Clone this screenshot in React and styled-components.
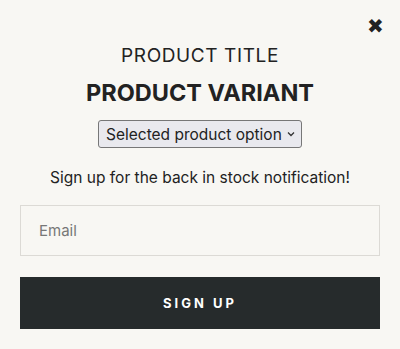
import React from "react";
import styled, { createGlobalStyle } from "styled-components";

const Global = createGlobalStyle`
  html, body {
    margin: 0;
    background: #f8f7f3;
    font-family: Inter, "Noto Sans", sans-serif;
    color: #222;
  }
`;

const App = () => {
  return (
    <>
      <Global />
      <Modal>
        <CloseRow>
          <Close aria-label="Close">✖</Close>
        </CloseRow>
        <Title>PRODUCT TITLE</Title>
        <Variant>PRODUCT VARIANT</Variant>
        <SelectBox>
          <Select defaultValue="opt">
            <option value="opt">Selected product option</option>
          </Select>
          <svg width="8" height="6" viewBox="0 0 8 6">
            <path d="M1 1.5 L4 4.5 L7 1.5" fill="none" stroke="#333" strokeWidth="1.3" />
          </svg>
        </SelectBox>
        <Note>Sign up for the back in stock notification!</Note>
        <Form>
          <Input placeholder="Email" />
          <Button>SIGN UP</Button>
        </Form>
      </Modal>
    </>
  );
};

export default App;

const Modal = styled.div`
  width: 400px;
  height: 349px;
  box-sizing: border-box;
  padding: 15px 20px 20px;
  display: flex;
  flex-direction: column;
  align-items: center;
`;
const CloseRow = styled.div`
  align-self: stretch;
  display: flex;
  justify-content: flex-end;
  height: 20px;
`;
const Close = styled.span`
  font-size: 20px;
  line-height: 22px;
  color: #222;
  margin-right: -4px;
  cursor: pointer;
`;
const Title = styled.h2`
  margin: 6px 0 0;
  font-size: 19px;
  font-weight: 400;
  letter-spacing: 0.6px;
  line-height: 30px;
  color: #222;
`;
const Variant = styled.h1`
  margin: 7px 0 0;
  font-size: 23.5px;
  font-weight: 700;
  line-height: 30px;
  color: #222;
`;
const SelectBox = styled.label`
  margin-top: 12px;
  display: inline-flex;
  align-items: center;
  gap: 5px;
  height: 28px;
  box-sizing: border-box;
  padding: 0 6px 0 7px;
  background: #e9e9ee;
  border: 1px solid #777;
  border-radius: 3px;
`;
const Select = styled.select`
  appearance: none;
  border: none;
  background: transparent;
  font-family: inherit;
  font-size: 15.5px;
  color: #222;
  padding: 0;
  outline: none;
`;
const Note = styled.p`
  margin: 20px 0 0;
  font-size: 15.5px;
  line-height: 20px;
  color: #222;
`;
const Form = styled.div`
  align-self: stretch;
  display: flex;
  flex-direction: column;
  gap: 21px;
  margin-top: 17px;
`;
const Input = styled.input`
  height: 51px;
  box-sizing: border-box;
  border: 1px solid #dcdad5;
  background: transparent;
  padding: 0 18px;
  font-family: inherit;
  font-size: 15px;
  outline: none;
  &::placeholder {
    color: #777;
  }
`;
const Button = styled.button`
  height: 52px;
  border: none;
  background: #262b2c;
  color: #fff;
  font-family: inherit;
  font-weight: 700;
  font-size: 13px;
  letter-spacing: 3px;
  cursor: pointer;
`;
